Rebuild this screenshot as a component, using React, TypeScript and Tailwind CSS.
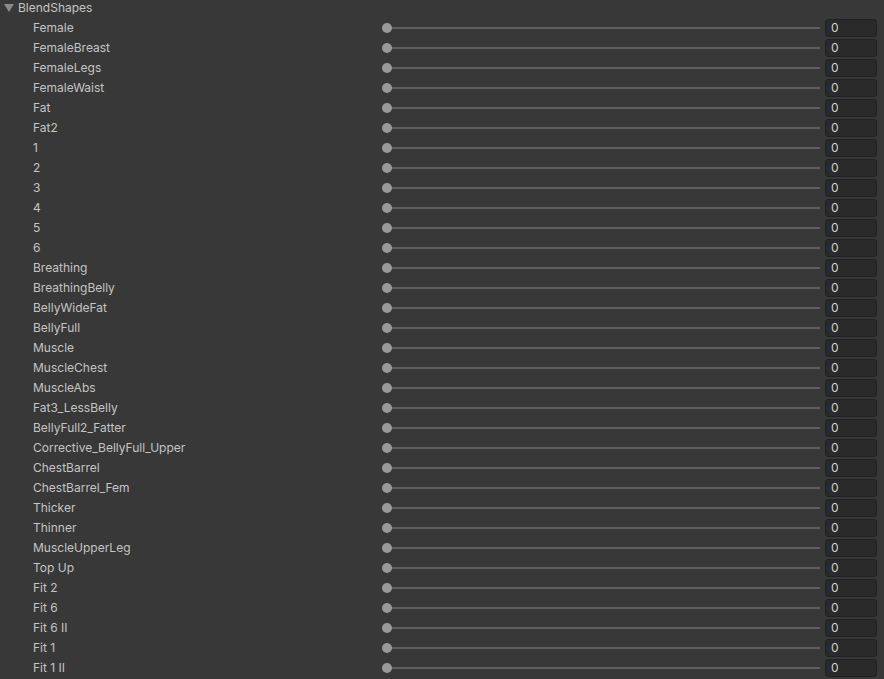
const shapes = [
  "Female", "FemaleBreast", "FemaleLegs", "FemaleWaist", "Fat", "Fat2",
  "1", "2", "3", "4", "5", "6",
  "Breathing", "BreathingBelly", "BellyWideFat", "BellyFull", "Muscle", "MuscleChest",
  "MuscleAbs", "Fat3_LessBelly", "BellyFull2_Fatter", "Corrective_BellyFull_Upper",
  "ChestBarrel", "ChestBarrel_Fem", "Thicker", "Thinner", "MuscleUpperLeg", "Top Up",
  "Fit 2", "Fit 6", "Fit 6 II", "Fit 1", "Fit 1 II",
]

function Row({ name }: { name: string }) {
  return (
    <div className="flex h-[20px] items-center">
      <div className="w-[377px] shrink-0 pl-[33px] leading-[20px] whitespace-nowrap">{name}</div>
      <div className="relative flex-1 h-[20px] flex items-center ml-[5px] mr-[5px]">
        <div className="h-[2px] w-full bg-[#5e5e5e]" />
        <div className="absolute left-0 top-[5px] h-[10px] w-[10px] rounded-full bg-[#999999]" />
      </div>
      <div className="w-[52px] h-[18px] mr-[7px] shrink-0 rounded-[3px] bg-[#2a2a2a] border border-[#212121] flex items-center pl-[5px] text-[#d2d2d2] leading-[16px]">
        0
      </div>
    </div>
  )
}

export default function App() {
  return (
    <div
      className="w-[884px] h-[679px] overflow-hidden bg-[#383838] text-[#c4c4c4] text-[12px]"
      style={{ fontFamily: '"Inter", "Noto Sans", sans-serif' }}
    >
      <div className="h-[18px] flex items-center pl-[4px] pb-[2px] leading-[16px]">
        <svg width="10" height="8" viewBox="0 0 10 8" className="mr-[4px]">
          <path d="M0 0 L10 0 L5 8 Z" fill="#8a8a8a" />
        </svg>
        <span>BlendShapes</span>
      </div>
      {shapes.map((s) => (
        <Row key={s} name={s} />
      ))}
    </div>
  )
}
